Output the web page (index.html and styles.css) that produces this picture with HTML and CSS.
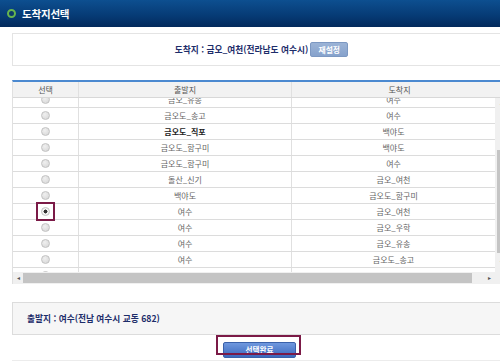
FILE: index.html
```html
<!DOCTYPE html>
<html lang="ko">
<head>
    <meta charset="UTF-8">
    <meta name="viewport" content="width=device-width, initial-scale=1.0">
    <title>도착지선택</title>
    <link rel="stylesheet" href="styles.css">
</head>
<body>
    <div class="header">
        <span class="header-dot"></span>
        <h1>도착지선택</h1>
    </div>
    <div class="content">
        <div class="dest-box">
            <span class="dest-text">도착지 : 금오_여천(전라남도 여수시)</span>
            <button class="btn-reset">재설정</button>
        </div>

        <div class="grid">
            <div class="grid-head">
                <div>선택</div>
                <div>출발지</div>
                <div>도착지</div>
            </div>
            <div class="grid-body">
                <div class="rows-wrap">
                    <div class="rows">
                        <div class="row"><div><span class="radio"></span></div><div>금오_유송</div><div>여수</div></div>
                        <div class="row"><div><span class="radio"></span></div><div>금오도_송고</div><div>여수</div></div>
                        <div class="row"><div><span class="radio"></span></div><div class="strong">금오도_직포</div><div>백야도</div></div>
                        <div class="row"><div><span class="radio"></span></div><div>금오도_함구미</div><div>백야도</div></div>
                        <div class="row"><div><span class="radio"></span></div><div>금오도_함구미</div><div>여수</div></div>
                        <div class="row"><div><span class="radio"></span></div><div>돌산_신기</div><div>금오_여천</div></div>
                        <div class="row"><div><span class="radio"></span></div><div>백야도</div><div>금오도_함구미</div></div>
                        <div class="row"><div><span class="radio checked"><span class="focus-box"></span></span></div><div>여수</div><div>금오_여천</div></div>
                        <div class="row"><div><span class="radio"></span></div><div>여수</div><div>금오_우학</div></div>
                        <div class="row"><div><span class="radio"></span></div><div>여수</div><div>금오_유송</div></div>
                        <div class="row"><div><span class="radio"></span></div><div>여수</div><div>금오도_송고</div></div>
                        <div class="row"><div><span class="radio"></span></div><div>여수</div><div>금오도_함구미</div></div>
                    </div>
                </div>
                <div class="vscroll">
                    <span class="arrow">&#9652;</span>
                    <span class="vthumb"></span>
                    <span class="arrow">&#9662;</span>
                </div>
            </div>
            <div class="hscroll">
                <div class="htrack">
                    <span class="arrow">&#9666;</span>
                    <span class="hthumb"></span>
                    <span class="arrow">&#9656;</span>
                </div>
                <div class="corner"></div>
            </div>
        </div>

        <div class="start-box">출발지 : 여수(전남 여수시 교동 682)</div>

        <div class="actions">
            <div class="btn-wrap">
                <button class="btn-done">선택완료</button>
                <span class="focus-box wide"></span>
            </div>
        </div>
    </div>
</body>
</html>
```

FILE: styles.css
```css
body {
    margin: 0;
    width: 500px;
    height: 361px;
    overflow: hidden;
    background: #fff;
    font-family: 'Noto Sans CJK KR', 'Noto Sans', sans-serif;
    color: #555;
}
.header {
    height: 27px;
    display: flex;
    align-items: center;
    gap: 6px;
    padding-left: 7px;
    background: linear-gradient(to bottom, #0d4f90, #063a74 60%, #022a5c);
}
.header-dot {
    width: 5px;
    height: 5px;
    border: 2px solid #67b54e;
    border-radius: 50%;
    background: #0c3a6a;
}
.header h1 {
    margin: 0;
    font-size: 10.5px;
    font-weight: bold;
    color: #fff;
    letter-spacing: -0.2px;
}
.content {
    width: 495px;
    padding: 6px 0 0 12px;
}
.dest-box {
    height: 31px;
    border: 1px solid #e4e4e4;
    display: flex;
    align-items: center;
    justify-content: center;
    gap: 2px;
    padding-left: 4px;
}
.dest-text {
    font-size: 8.7px;
    font-weight: bold;
    color: #1d2d6a;
}
.btn-reset {
    width: 38px;
    height: 15px;
    padding: 0;
    border: 1px solid #7c98c2;
    border-radius: 2px;
    background: linear-gradient(to bottom, #9bb3d6, #86a2cc);
    color: #fff;
    font-family: inherit;
    font-size: 7.8px;
    font-weight: bold;
}
.grid {
    margin-top: 14px;
    border-top: 2px solid #4b89d0;
    border-left: 1px solid #e0e0e0;
}
.grid-head,
.row {
    display: grid;
    grid-template-columns: 65px 213px 1fr;
    text-align: center;
}
.grid-head {
    height: 16px;
    background: #f2f2f2;
    border-bottom: 1px solid #d8d8d8;
    box-sizing: border-box;
    font-size: 8px;
    line-height: 15px;
    color: #555;
}
.grid-head div + div,
.row div + div {
    border-left: 1px solid #e0e0e0;
}
.grid-body {
    display: flex;
    height: 174px;
}
.rows-wrap {
    flex: 1;
    overflow: hidden;
}
.rows {
    margin-top: -6px;
}
.row {
    height: 16px;
    box-sizing: border-box;
    border-bottom: 1px solid #dcdcdc;
    font-size: 8px;
    line-height: 15px;
    color: #666;
}
.row .strong {
    color: #222;
    font-weight: bold;
}
.row div:first-child {
    display: flex;
    align-items: center;
    justify-content: center;
}
.radio {
    position: relative;
    width: 7px;
    height: 7px;
    border: 1px solid #c2c2c2;
    border-radius: 50%;
    background: radial-gradient(circle at 40% 35%, #f0f0f0, #d4d4d4);
}
.radio.checked {
    background: radial-gradient(circle, #333 0 1.8px, #f4f4f4 2.2px);
}
.focus-box {
    position: absolute;
    top: -6px;
    left: -6px;
    width: 15px;
    height: 15px;
    border: 2px solid #7b1a47;
}
.vscroll {
    width: 12px;
    background: #f0f0f0;
    display: flex;
    flex-direction: column;
    align-items: center;
}
.vthumb {
    width: 9px;
    height: 103px;
    margin: 42px 0 4px;
    background: #c4c4c4;
}
.arrow {
    font-size: 6px;
    line-height: 10px;
    color: #555;
}
.hscroll {
    display: flex;
    height: 12px;
}
.htrack {
    flex: 1;
    display: flex;
    align-items: center;
    background: #f0f0f0;
    padding: 0 4px;
    gap: 3px;
}
.hthumb {
    flex: 1;
    height: 10px;
    background: #c4c4c4;
    margin-right: 13px;
}
.corner {
    width: 12px;
    background: #f0f0f0;
}
.start-box {
    margin-top: 18px;
    height: 31px;
    border: 1px solid #dcdcdc;
    border-right: none;
    background: #f6f6f6;
    padding-left: 14px;
    font-size: 8.7px;
    font-weight: bold;
    line-height: 31px;
    color: #1d2d6a;
}
.actions {
    display: flex;
    justify-content: center;
    padding-top: 7px;
    height: 18px;
    border-bottom: 1px solid #ececec;
}
.btn-wrap {
    position: relative;
    height: 16px;
}
.btn-done {
    display: block;
    width: 73px;
    height: 16px;
    padding: 0;
    border: 1px solid #3a61aa;
    border-radius: 2px;
    background: linear-gradient(to bottom, #6f98de, #3b68bd);
    color: #fff;
    font-family: inherit;
    font-size: 7.6px;
    font-weight: bold;
    line-height: 14px;
}
.focus-box.wide {
    top: -7px;
    left: -7px;
    width: 81px;
    height: 16px;
}
```
